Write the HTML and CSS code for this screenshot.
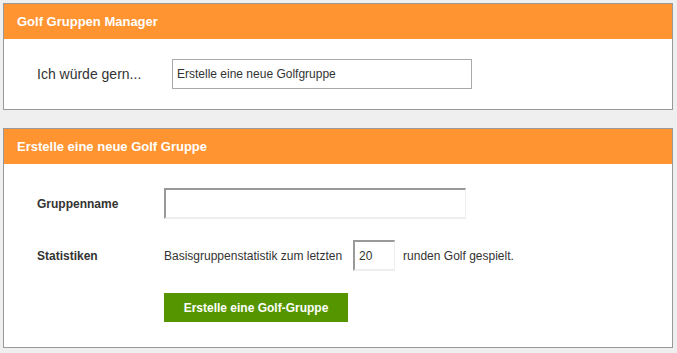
FILE: index.html
```html
<!DOCTYPE html>
<html lang="de">
  <head>
    <meta charset="UTF-8" />
    <meta name="viewport" content="width=device-width, initial-scale=1.0" />
    <title>Golf Gruppen Manager</title>
    <link rel="stylesheet" href="styles.css">
  </head>
  <body>
    <div class="panel">
      <div class="panel-head">Golf Gruppen Manager</div>
      <div class="panel-body intro">
        <span class="intro-label">Ich würde gern...</span>
        <select class="choice">
          <option>Erstelle eine neue Golfgruppe</option>
        </select>
      </div>
    </div>

    <div class="panel">
      <div class="panel-head">Erstelle eine neue Golf Gruppe</div>
      <div class="panel-body form">
        <div class="row">
          <label class="label" for="name">Gruppenname</label>
          <input class="field name" id="name" type="text">
        </div>
        <div class="row">
          <span class="label">Statistiken</span>
          <span class="text">Basisgruppenstatistik zum letzten</span>
          <input class="field rounds" type="text" value="20">
          <span class="text after">runden Golf gespielt.</span>
        </div>
        <div class="row">
          <span class="label"></span>
          <button class="create">Erstelle eine Golf-Gruppe</button>
        </div>
      </div>
    </div>
  </body>
</html>
```

FILE: styles.css
```css
* {
  box-sizing: border-box;
  font-family: "Liberation Sans", Arial, sans-serif;
}
body {
  margin: 3px 4px 0 3px;
  background: #efefef;
  color: #333;
}

.panel {
  background: #fff;
  border: 1px solid #999;
}
.panel + .panel {
  margin-top: 18px;
}
.panel-head {
  height: 35px;
  line-height: 35px;
  padding-left: 13px;
  background: #ff9431;
  color: #fff;
  font-size: 13px;
  font-weight: bold;
}

.intro {
  display: flex;
  align-items: center;
  padding: 20px 33px;
}
.intro-label {
  width: 135px;
  font-size: 14px;
}
.choice {
  appearance: none;
  width: 300px;
  height: 30px;
  padding: 0 4px;
  border: 1px solid #aaa;
  border-radius: 0;
  background: #fff;
  color: #333;
  font-size: 12px;
}

.form {
  padding: 24px 33px 25px;
}
.row {
  display: flex;
  align-items: center;
}
.row + .row {
  margin-top: 21px;
}
.row:last-child {
  margin-top: 22px;
}
.label {
  width: 127px;
  flex: none;
  font-size: 12px;
  font-weight: bold;
}
.text {
  font-size: 12px;
}
.text.after {
  margin-left: 8px;
}
.field {
  height: 31px;
  border-style: solid;
  border-width: 2px 1px 2px 2px;
  border-color: #999 #eee #eee #999;
  padding: 0 4px;
  font-size: 12px;
  color: #333;
  outline: none;
}
.name {
  width: 302px;
}
.rounds {
  width: 42px;
  margin-left: 11px;
}
.create {
  width: 184px;
  height: 29px;
  border: 0;
  background: #559600;
  color: #fff;
  font-size: 12px;
  font-weight: bold;
}
```
